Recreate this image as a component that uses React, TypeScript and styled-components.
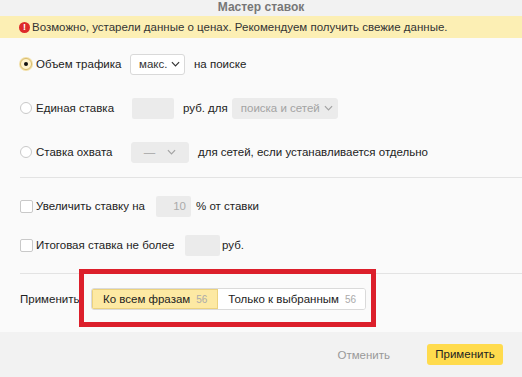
import styled, { createGlobalStyle } from 'styled-components';

const GlobalStyle = createGlobalStyle`
  html, body {
    margin: 0;
    padding: 0;
    background: #fafafa;
  }
  body {
    font-family: "Liberation Sans", Arial, sans-serif;
    font-size: 11.5px;
    color: #222;
  }
`;

export default function App() {
  return (
    <>
      <GlobalStyle />
      <Dialog>
        <Header>Мастер ставок</Header>
        <Warning>
          <WarnIcon>!</WarnIcon>
          Возможно, устарели данные о ценах. Рекомендуем получить свежие данные.
        </Warning>
        <Body>
          <Row $top={15}>
            <Radio $checked />
            <Label $width={94}>Объем трафика</Label>
            <Select $width={55}>
              макс. <Chevron />
            </Select>
            <Text $left={9}>на поиске</Text>
          </Row>
          <Row $top={22}>
            <Radio />
            <Label $width={96}>Единая ставка</Label>
            <Input $width={42} />
            <Text $left={9}>руб. для</Text>
            <Select $width={106} $disabled $left={4}>
              поиска и сетей <Chevron />
            </Select>
          </Row>
          <Row $top={22}>
            <Radio />
            <Label $width={95}>Ставка охвата</Label>
            <Select $width={58} $disabled $center>
              — <Chevron />
            </Select>
            <Text $left={9}>для сетей, если устанавливается отдельно</Text>
          </Row>
          <Divider $top={14} />
          <Row $top={17}>
            <Checkbox />
            <Label $width={120}>Увеличить ставку на</Label>
            <Input $width={35}>10</Input>
            <Text $left={5}>% от ставки</Text>
          </Row>
          <Row $top={17}>
            <Checkbox />
            <Label $width={149}>Итоговая ставка не более</Label>
            <Input $width={35} />
            <Text $left={2}>руб.</Text>
          </Row>
          <Divider $top={17} />
          <ApplyRow>
            <ApplyLabel>Применить</ApplyLabel>
            <Segmented>
              <Segment $active>
                Ко всем фразам<Count>56</Count>
              </Segment>
              <Segment>
                Только к выбранным<Count>56</Count>
              </Segment>
            </Segmented>
            <Highlight />
          </ApplyRow>
        </Body>
        <Footer>
          <CancelButton>Отменить</CancelButton>
          <PrimaryButton>Применить</PrimaryButton>
        </Footer>
      </Dialog>
    </>
  );
}

function Chevron() {
  return (
    <ChevronSvg viewBox="0 0 10 6" width="9" height="6">
      <path d="M1 1l4 4 4-4" fill="none" stroke="currentColor" strokeWidth="1.3" />
    </ChevronSvg>
  );
}

const Dialog = styled.div`
  width: 522px;
  height: 377px;
  display: flex;
  flex-direction: column;
  overflow: hidden;
  background: #fafafa;
`;

const Header = styled.div`
  height: 16px;
  line-height: 14px;
  background: #f2f2f2;
  text-align: center;
  font-size: 12px;
  font-weight: bold;
  color: #777;
`;

const Warning = styled.div`
  height: 22px;
  display: flex;
  align-items: center;
  padding-left: 19px;
  background: #fcefb4;
  color: #333;
  white-space: nowrap;
`;

const WarnIcon = styled.span`
  width: 11px;
  height: 11px;
  border-radius: 50%;
  background: #dd2a2a;
  color: #fff;
  font-size: 9px;
  font-weight: bold;
  line-height: 11px;
  text-align: center;
  margin-right: 2px;
`;

const Body = styled.div`
  flex: 1;
  padding-left: 20px;
`;

const Row = styled.div<{ $top: number }>`
  height: 22px;
  margin-top: ${({ $top }) => $top}px;
  display: flex;
  align-items: center;
  white-space: nowrap;
`;

const Radio = styled.span<{ $checked?: boolean }>`
  box-sizing: border-box;
  flex: none;
  width: 12px;
  height: 12px;
  border-radius: 50%;
  border: 1px solid ${({ $checked }) => ($checked ? '#d8bb6c' : '#c9c9c9')};
  background: ${({ $checked }) => ($checked ? '#fff3cc' : '#fff')};
  box-shadow: ${({ $checked }) => ($checked ? '0 0 0 1px #f1dfa8' : 'none')};
  display: flex;
  align-items: center;
  justify-content: center;
  margin-right: 4px;
  &::after {
    content: '';
    display: ${({ $checked }) => ($checked ? 'block' : 'none')};
    width: 4px;
    height: 4px;
    border-radius: 50%;
    background: #111;
  }
`;

const Checkbox = styled.span`
  box-sizing: border-box;
  flex: none;
  width: 13px;
  height: 13px;
  border-radius: 2px;
  border: 1px solid #c9c9c9;
  background: #fff;
  margin-right: 3px;
`;

const Label = styled.span<{ $width: number }>`
  flex: none;
  width: ${({ $width }) => $width}px;
  color: #222;
`;

const Text = styled.span<{ $left?: number }>`
  margin-left: ${({ $left }) => $left ?? 0}px;
  color: #222;
`;

const Select = styled.span<{ $width: number; $disabled?: boolean; $left?: number; $center?: boolean }>`
  box-sizing: border-box;
  flex: none;
  width: ${({ $width }) => $width}px;
  height: 21px;
  margin-left: ${({ $left }) => $left ?? 0}px;
  display: flex;
  align-items: center;
  justify-content: ${({ $center }) => ($center ? 'center' : 'flex-start')};
  gap: ${({ $center }) => ($center ? '12px' : '4px')};
  padding: 0 8px;
  border-radius: 3px;
  border: 1px solid ${({ $disabled }) => ($disabled ? '#ebebeb' : '#d9d9d9')};
  background: ${({ $disabled }) => ($disabled ? '#ebebeb' : '#fff')};
  color: ${({ $disabled }) => ($disabled ? '#a3a3a3' : '#333')};
`;

const ChevronSvg = styled.svg`
  flex: none;
`;

const Input = styled.span<{ $width: number }>`
  box-sizing: border-box;
  flex: none;
  width: ${({ $width }) => $width}px;
  height: 21px;
  line-height: 21px;
  padding-right: 5px;
  text-align: right;
  background: #ebebeb;
  border-radius: 2px;
  color: #aaa;
`;

const Divider = styled.div<{ $top: number }>`
  height: 1px;
  margin-top: ${({ $top }) => $top}px;
  background: #e3e3e3;
`;

const ApplyRow = styled.div`
  position: relative;
  margin-top: 14px;
  height: 22px;
  display: flex;
  align-items: center;
  white-space: nowrap;
`;

const ApplyLabel = styled.span`
  width: 71px;
  color: #222;
`;

const Segmented = styled.div`
  display: flex;
  height: 22px;
  box-sizing: border-box;
  border: 1px solid #dadada;
  border-radius: 3px;
  background: #fff;
  overflow: hidden;
`;

const Segment = styled.span<{ $active?: boolean }>`
  display: flex;
  align-items: center;
  padding: ${({ $active }) => ($active ? '0 11px 0 11px' : '0 9px 0 10px')};
  background: ${({ $active }) => ($active ? '#fde9a3' : '#fff')};
  box-shadow: ${({ $active }) => ($active ? 'inset 0 0 0 1px #ecd27e' : 'none')};
  color: #222;
`;

const Count = styled.span`
  margin-left: 6px;
  font-size: 10px;
  color: #aaa;
`;

const Highlight = styled.div`
  position: absolute;
  left: 59px;
  top: -19px;
  width: 297px;
  height: 58px;
  box-sizing: border-box;
  border: 5px solid #dc1f2b;
  pointer-events: none;
`;

const Footer = styled.div`
  height: 45px;
  flex: none;
  display: flex;
  align-items: center;
  justify-content: flex-end;
  padding-right: 19px;
  background: #f2f2f2;
`;

const CancelButton = styled.span`
  padding: 0 12px;
  color: #999;
  margin-right: 25px;
`;

const PrimaryButton = styled.span`
  box-sizing: border-box;
  width: 76px;
  height: 21px;
  line-height: 21px;
  text-align: center;
  border-radius: 3px;
  background: #ffdb4d;
  color: #222;
`;
